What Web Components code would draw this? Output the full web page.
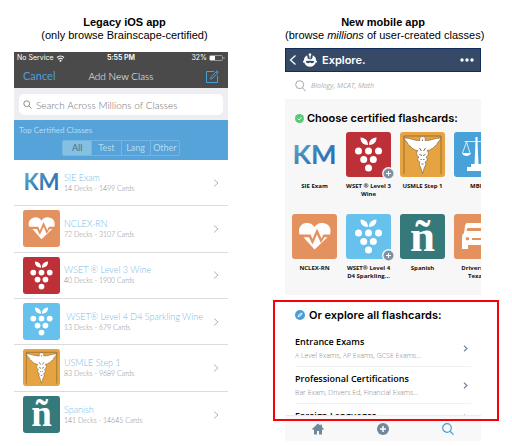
<!DOCTYPE html>
<html lang="en">
<head>
<meta charset="utf-8">
<title>Class browsing: legacy and new app</title>
<style>
  body { margin: 0; background: #fff; font-family: "Liberation Sans", Arial, sans-serif; color: #000; }
</style>
</head>
<body>
<compare-page></compare-page>

<script>
const define = (name, html, setup) => {
  const template = document.createElement('template');
  template.innerHTML = html;
  customElements.define(name, class extends HTMLElement {
    constructor() {
      super();
      this.attachShadow({ mode: 'open' });
    }
    connectedCallback() {
      if (this.shadowRoot.childNodes.length) return;
      const content = template.content.cloneNode(true);
      if (setup) setup(this, content);
      this.shadowRoot.append(content);
    }
  });
};

const grapes = `<g fill="#fff">
  <path d="M22 13C16 13 14.500 9 14.500 5.500C19.500 6 22 8.500 22 13ZM23 13C23 8.500 25.500 6 30.500 5.500C30.500 9 29 13 23 13Z"/>
  <circle cx="12.500" cy="19" r="3.500"/><circle cx="22.500" cy="19" r="3.500"/><circle cx="32.500" cy="19" r="3.500"/>
  <circle cx="17.700" cy="27.500" r="3.500"/><circle cx="27.300" cy="27.500" r="3.500"/><circle cx="22.500" cy="36" r="3.500"/></g>`;

const pictures = {
  km: `<defs><linearGradient id="g" x1="0" y1="0" x2="1" y2="1"><stop offset="0" stop-color="#67b5c9"/><stop offset=".5" stop-color="#3b82b8"/><stop offset="1" stop-color="#1f5fb8"/></linearGradient></defs>
    <text x="22.500" y="32" text-anchor="middle" font-family="Lato, sans-serif" font-weight="700" font-size="27" fill="url(#g)">KM</text>`,
  heart: `<rect width="45" height="45" rx="3" fill="#e3915f"/>
    <path fill="#fff" d="M7.500 20.500C5.500 14 9 9.500 14 9C18 8.500 21 10.500 22.500 13C24 10.500 27 8.500 31 9C37 9.500 40 14.500 38 20.500H31.500L29.500 24.500L25 14.500L20.500 25L18.500 20.500Z"/>
    <path fill="#fff" d="M11.500 23.200H17L20.500 30.500L25 20.500L28.800 29L32.500 23.200H35.500L22.500 35.500Z"/>`,
  grapes: `<rect width="45" height="45" rx="3" fill="#bd3037"/>${grapes}`,
  sparkling: `<rect width="45" height="45" rx="3" fill="#66c1ec"/>${grapes}`,
  caduceus: `<rect width="45" height="45" rx="3" fill="#e6a341"/>
    <path fill="none" stroke="#7d5a28" stroke-width=".7" d="M4 42V4H41V42"/>
    <path fill="#fff" stroke="#5e4725" stroke-width=".5" stroke-linejoin="round" d="M22.500 4.500C20 4.500 19 6.500 20 8.500C14 9 10 5.500 4 6C5 9 7 9.500 7.500 11C8 13.500 10 13.500 11 15C12 17 14 16.500 15 18L18 18.500C15.500 21 17 24 19 25C17 27 17.500 29 20 30C18.500 32 20 34 20.500 35L22.500 41.500L24.500 35C25.500 34 26.500 32 25 30C27.500 29 28 27 26 25C28 24 29.500 21 27 18.500L30 18C31 16.500 33 17 34 15C35 13.500 37 13.500 37.500 11C38 9.500 40 9 41 6C35 5.500 31 9 25 8.500C26 6.500 25 4.500 22.500 4.500Z"/>
    <path fill="none" stroke="#5e4725" stroke-width=".8" d="M19.500 16L21.500 19M25.500 16L23.500 19M19.500 22.500L22 23.500M25.500 22.500L23 23.500M20.500 27.500H21.800M24.500 27.500H23.200M21.500 32H23.500M22.500 7.500V9"/>`,
  spanish: `<rect width="45" height="45" rx="3" fill="#35797a"/>
    <text x="22.500" y="36.500" text-anchor="middle" font-family="'Liberation Serif', serif" font-weight="700" font-size="45" fill="#fff">ñ</text>`,
  scales: `<rect width="45" height="45" rx="3" fill="#48a2d9"/>
    <g fill="none" stroke="#fff" stroke-width=".8"><path d="M10.500 9.500H34.500M12.500 10L8.500 21M12.500 10L16 21M32.500 10L29 21M32.500 10L36.500 21"/></g>
    <path fill="#fff" d="M8 21H17C16 25 9 25 8 21ZM28 21H37C36 25 29 25 28 21ZM21.500 5H23.500V9L24.500 33H20.500L21.500 9ZM17 32H28V35H32V39H13V35H17Z"/>`,
  car: `<rect width="45" height="45" rx="3" fill="#e3915f"/>
    <path fill="#fff" fill-rule="evenodd" d="M13 9H32Q34 9 35 12L37.500 19Q39 20 39 23V35H33V31H14V35H8V23Q8 20 10 19L11 12Q11.500 9 13 9ZM13.500 14L12.500 17H33L31.500 14ZM13.500 23A1.800 1.800 0 1 0 13.500 26.600A1.800 1.800 0 1 0 13.500 23ZM33.500 23A1.800 1.800 0 1 0 33.500 26.600A1.800 1.800 0 1 0 33.500 23Z"/>
    <path fill="#e3915f" d="M18 24H29V26H18Z"/>`
};

define('class-icon', `
  <style>
    :host { display: block; aspect-ratio: 1; }
    svg { display: block; width: 100%; height: 100%; }
  </style>
  <svg viewBox="0 0 45 45" aria-hidden="true"></svg>`,
  (host, root) => { root.querySelector('svg').innerHTML = pictures[host.getAttribute('kind')]; });

define('column-heading', `
  <style>
    :host { display: block; text-align: center; white-space: nowrap; font-size: 11px; line-height: 13px; }
    h2 { margin: 0; font-size: 11px; font-weight: 700; }
    p { margin: 0; }
  </style>
  <h2><slot name="title"></slot></h2>
  <p><slot></slot></p>`);

define('status-bar', `
  <style>
    :host { display: grid; grid-template-columns: 1fr auto 1fr; align-items: center; height: 12px; padding: 0 3px;
      color: #fff; font: 7px/12px Inter, sans-serif; }
    span { display: flex; align-items: center; gap: 3px; }
    .right { justify-content: flex-end; gap: 2px; }
    b { font-weight: 600; }
  </style>
  <span>No Service
    <svg width="9" height="7" viewBox="0 0 9 7"><path d="M1 2.500Q4.500-.500 8 2.500M2.300 4.200Q4.500 2.300 6.700 4.200" fill="none" stroke="#fff" stroke-width="1.200"/><circle cx="4.500" cy="5.700" r="1" fill="#fff"/></svg>
  </span>
  <b>5:55 PM</b>
  <span class="right">32%
    <svg width="16" height="6" viewBox="0 0 16 6"><rect x=".5" y=".5" width="13" height="5" rx="1" fill="none" stroke="#999"/><rect x="1" y="1" width="5" height="4" fill="#fff"/><path d="M15 2v2" stroke="#999"/></svg>
  </span>`);

define('class-row', `
  <style>
    :host { display: grid; border-bottom: 1px solid #dcdcdc; }
    :host(:last-child) { border-bottom: 0; }
    a { display: flex; align-items: center; gap: 4px; padding: 0 9px; color: inherit; text-decoration: none; white-space: nowrap; }
    class-icon { flex: none; width: 37px; }
    .text { flex: 1; }
    strong { display: block; font: 300 9px/10px Lato, sans-serif; color: #79bbe4; }
    small { display: block; font: 300 7px/10px Lato, sans-serif; color: #888; }
    svg { flex: none; }
  </style>
  <a href="#">
    <class-icon></class-icon>
    <span class="text"><strong><slot></slot></strong><small><slot name="count"></slot></small></span>
    <svg width="6" height="10" viewBox="0 0 6 10"><path d="M1 1.500L5 5L1 8.500" fill="none" stroke="#b4b4b4"/></svg>
  </a>`,
  (host, root) => { root.querySelector('class-icon').setAttribute('kind', host.getAttribute('kind')); });

define('legacy-app', `
  <style>
    :host { display: block; font-family: Lato, sans-serif; }
    header { background: #4a4a4a; }
    .bar { display: grid; grid-template-columns: 1fr auto 1fr; align-items: center; height: 24px; padding: 0 9px; }
    h3 { margin: 0; font: 300 10px/12px Lato, sans-serif; color: #fff; }
    button { border: 0; padding: 0; background: none; font: 400 11px/12px Lato, sans-serif; color: #4a9fd8; justify-self: start; }
    .edit { justify-self: end; }
    svg { display: block; }
    .search { background: #ededf2; padding: 6px 5px 5px; }
    label.field { display: flex; align-items: center; gap: 4px; height: 21px; padding: 0 4px; border-radius: 5px; background: #fff; }
    input[type=search] { flex: 1; min-width: 0; border: 0; padding: 0; outline: 0; background: none; font: 300 10px/14px Lato, sans-serif; }
    input::placeholder { color: #707070; opacity: 1; }
    .filter { background: #55a3d9; padding: 5px 5px 4px; color: #b7daf1; font-size: 8px; line-height: 11px; }
    fieldset { display: flex; width: 118px; margin: 4px auto 0; padding: 0; box-sizing: border-box; border: 1px solid #74b5e1; border-radius: 2px; font-size: 9px; }
    fieldset label { flex: 1; text-align: center; line-height: 14px; border-left: 1px solid #74b5e1; }
    fieldset label:first-child { border-left: 0; }
    fieldset label:has(:checked) { background: #85bfe1; color: #45728f; }
    fieldset input { appearance: none; position: absolute; margin: 0; }
    .list { display: grid; grid-auto-rows: 1fr; min-height: 278px; }
  </style>
  <header>
    <status-bar></status-bar>
    <div class="bar">
      <button>Cancel</button>
      <h3>Add New Class</h3>
      <button class="edit" aria-label="Edit"><svg width="13" height="13" viewBox="0 0 13 13" fill="none" stroke="#4a9fd8"><path d="M8 1.500H.5V12.500H11.500V5.500"/><path d="M4.500 9L5.300 6.700L11 .8L12.400 2.200L6.700 8.200ZM10 2L11.300 3.400"/></svg></button>
    </div>
  </header>
  <div class="search">
    <label class="field">
      <svg width="9" height="9" viewBox="0 0 9 9" fill="none" stroke="#8a8a8a"><circle cx="3.700" cy="3.700" r="2.900"/><path d="M5.900 5.900L8.400 8.400"/></svg>
      <input type="search" aria-label="Search classes" placeholder="Search Across Millions of Classes">
    </label>
  </div>
  <div class="filter">
    Top Certified Classes
    <fieldset aria-label="Class type">
      <label><input type="radio" name="type" checked>All</label>
      <label><input type="radio" name="type">Test</label>
      <label><input type="radio" name="type">Lang</label>
      <label><input type="radio" name="type">Other</label>
    </fieldset>
  </div>
  <div class="list">
    <class-row kind="km">SIE Exam<span slot="count">14 Decks - 1499 Cards</span></class-row>
    <class-row kind="heart">NCLEX-RN<span slot="count">72 Decks - 3107 Cards</span></class-row>
    <class-row kind="grapes">WSET ® Level 3 Wine<span slot="count">40 Decks - 1900 Cards</span></class-row>
    <class-row kind="sparkling">&nbsp;WSET® Level 4 D4 Sparkling Wine<span slot="count">13 Decks - 679 Cards</span></class-row>
    <class-row kind="caduceus">USMLE Step 1<span slot="count">83 Decks - 9689 Cards</span></class-row>
    <class-row kind="spanish">Spanish<span slot="count">141 Decks - 14645 Cards</span></class-row>
  </div>`);

define('class-tile', `
  <style>
    :host { display: block; }
    a { display: block; position: relative; color: #111; text-decoration: none; text-align: center; font: 700 6px/8px "Open Sans", sans-serif; }
    class-icon { margin-bottom: 5px; }
    .badge { position: absolute; right: -4px; top: 35px; display: none; }
    :host([added]) .badge { display: block; }
  </style>
  <a href="#">
    <class-icon></class-icon>
    <svg class="badge" width="13" height="13" viewBox="0 0 13 13" aria-hidden="true"><circle cx="6.500" cy="6.500" r="6.500" fill="#f7f7f7"/><circle cx="6.500" cy="6.500" r="5" fill="#7e92a3"/><path d="M6.500 4v5M4 6.500h5" stroke="#fff"/></svg>
    <slot></slot>
  </a>`,
  (host, root) => { root.querySelector('class-icon').setAttribute('kind', host.getAttribute('kind')); });

define('topic-row', `
  <style>
    :host { display: block; border-bottom: 1px solid #f1f1f1; }
    a { display: flex; align-items: center; padding: 6px 3px 5px 0; color: #000; text-decoration: none; white-space: nowrap; }
    .text { flex: 1; }
    strong { display: block; font: 600 9px/12px "Open Sans", sans-serif; }
    small { display: block; margin-top: 3px; font: 300 7px/10px "Open Sans", sans-serif; color: #888; }
  </style>
  <a href="#">
    <span class="text"><strong><slot></slot></strong><small><slot name="examples"></slot></small></span>
    <svg width="5" height="7" viewBox="0 0 5 7"><path d="M1 .8L4 3.500L1 6.200" fill="none" stroke="#74889a" stroke-width="1.200"/></svg>
  </a>`);

define('mobile-app', `
  <style>
    :host { display: block; }
    header { display: flex; align-items: center; height: 24px; box-sizing: border-box; padding: 0 6px 0 3px; border: 1px solid #122d5c; background: #364a68; color: #fff; }
    button { border: 0; padding: 0; background: none; }
    svg { display: block; flex: none; }
    h3 { flex: 1; margin: 0 0 0 5px; font: 600 11px/14px Inter, sans-serif; }
    .logo { margin-left: 6px; }
    .search { display: flex; align-items: center; gap: 5px; height: 27px; padding: 0 10px; }
    .search input { flex: 1; min-width: 0; border: 0; padding: 0; outline: 0; background: none; font: italic 400 7px/10px "Open Sans", sans-serif; }
    .search input::placeholder { color: #b0b0b0; opacity: 1; }
    h4 { display: flex; align-items: center; margin: 0; font: 600 11px/14px Inter, sans-serif; white-space: nowrap; }
    .certified { background: #f7f7f7; padding: 12px 0 15px 7px; overflow: hidden; }
    .certified h4 { gap: 3px; margin: 0 3px 7px; }
    .tiles { display: grid; grid-template-columns: repeat(4, 45px); gap: 16px 9px; }
    .all { position: relative; }
    .topics { max-height: 120px; overflow: hidden; padding: 0 10px; box-sizing: border-box; }
    .topics h4 { gap: 4px; padding: 13px 0 8px; }
    .marker { position: absolute; inset: 5px -18px -6px -12px; border: 2px solid #fb0007; pointer-events: none; }
    nav { display: flex; justify-content: space-around; align-items: center; height: 26px; border-top: 1px solid #ececec; box-sizing: border-box; background: #f8f8f8; }
  </style>
  <header>
    <button aria-label="Back"><svg width="8" height="12" viewBox="0 0 8 12"><path d="M6.500 1.500L1.500 6L6.500 10.500" fill="none" stroke="#fff" stroke-width="1.300"/></svg></button>
    <svg class="logo" width="14" height="14" viewBox="0 0 14 14" aria-hidden="true">
      <path fill="#fff" d="M6.500 3.500L5.500 1L7 .3L8.500 1L7.500 3.500V5.500H6.500ZM4.200 2.200C1.500 3.500 .7 6 1 7.500L0 8V9.500H1.300C2 12 4 13.700 7 13.700S12 12 12.700 9.500H14V8L13 7.500C13.300 6 12.500 3.500 9.800 2.200L9.300 5.500Q7 7.200 4.700 5.500Z"/>
      <path fill="#364a68" d="M2.800 8Q7 7.300 11.200 8Q11 10.300 9 10.300Q7.500 10.300 7 9.300Q6.500 10.300 5 10.300Q3 10.300 2.800 8Z"/>
    </svg>
    <h3>Explore.</h3>
    <button aria-label="More"><svg width="14" height="4" viewBox="0 0 14 4" fill="#fff"><circle cx="2" cy="2" r="1.700"/><circle cx="7" cy="2" r="1.700"/><circle cx="12" cy="2" r="1.700"/></svg></button>
  </header>
  <label class="search">
    <svg width="11" height="12" viewBox="0 0 11 12" fill="none" stroke="#a4a8ac"><circle cx="4.700" cy="4.700" r="4"/><path d="M7.500 7.700L10.700 11.300"/></svg>
    <input type="search" aria-label="Search" placeholder="Biology, MCAT, Math">
  </label>
  <section class="certified">
    <h4><svg width="9" height="9" viewBox="0 0 9 9"><circle cx="4.500" cy="4.500" r="4.500" fill="#55ca72"/><path d="M2.600 4.600L4 6L6.500 3.200" fill="none" stroke="#fff"/></svg>Choose certified flashcards:</h4>
    <div class="tiles">
      <class-tile kind="km">SIE Exam</class-tile>
      <class-tile kind="grapes" added>WSET ® Level 3 Wine</class-tile>
      <class-tile kind="caduceus">USMLE Step 1</class-tile>
      <class-tile kind="scales">MBE</class-tile>
      <class-tile kind="heart">NCLEX-RN</class-tile>
      <class-tile kind="sparkling" added>WSET® Level 4 D4 Sparkling...</class-tile>
      <class-tile kind="spanish">Spanish</class-tile>
      <class-tile kind="car">Drivers Ed Texas</class-tile>
    </div>
  </section>
  <div class="all">
    <section class="topics">
      <h4><svg width="10" height="10" viewBox="0 0 10 10"><circle cx="5" cy="5" r="5" fill="#4b9fd3"/><path d="M7.600 2.400L6 6L2.400 7.600L4 4Z" fill="#fff"/><circle cx="5" cy="5" r=".8" fill="#4b9fd3"/></svg>Or explore all flashcards:</h4>
      <topic-row>Entrance Exams<span slot="examples">A Level Exams, AP Exams, GCSE Exams...</span></topic-row>
      <topic-row>Professional Certifications<span slot="examples">Bar Exam, Drivers Ed, Financial Exams...</span></topic-row>
      <topic-row>Foreign Languages</topic-row>
    </section>
    <div class="marker"></div>
  </div>
  <nav>
    <button aria-label="Home"><svg width="12" height="12" viewBox="0 0 12 12" fill="#71879c"><path d="M6 .5L0 6L1 7L2 6.200V11.500H5V8H7V11.500H10V6.200L11 7L12 6L10 4.200V1.500H8.500V2.800Z"/></svg></button>
    <button aria-label="Add"><svg width="12" height="12" viewBox="0 0 12 12"><circle cx="6" cy="6" r="6" fill="#71879c"/><path d="M6 3v6M3 6h6" stroke="#fff" stroke-width="1.500"/></svg></button>
    <button aria-label="Search"><svg width="12" height="12" viewBox="0 0 12 12" fill="none" stroke="#439fd6" stroke-width="1.200"><circle cx="5" cy="5" r="4.300"/><path d="M8 8.200L11.500 11.600"/></svg></button>
  </nav>`);

define('compare-page', `
  <style>
    :host { display: grid; grid-template-columns: 214fr 196fr; gap: 57px; padding: 16px 31px 5px 14px; align-items: start; }
    .column { display: grid; grid-template-columns: minmax(0, 1fr); }
    .legacy { gap: 10px; }
    .legacy column-heading { padding-left: 7px; }
    .mobile { gap: 6px; }
  </style>
  <div class="column legacy">
    <column-heading><span slot="title">Legacy iOS app</span>(only browse Brainscape-certified)</column-heading>
    <legacy-app></legacy-app>
  </div>
  <div class="column mobile">
    <column-heading><span slot="title">New mobile app</span>(browse <em>millions</em> of user-created classes)</column-heading>
    <mobile-app></mobile-app>
  </div>`);
</script>
</body>
</html>
